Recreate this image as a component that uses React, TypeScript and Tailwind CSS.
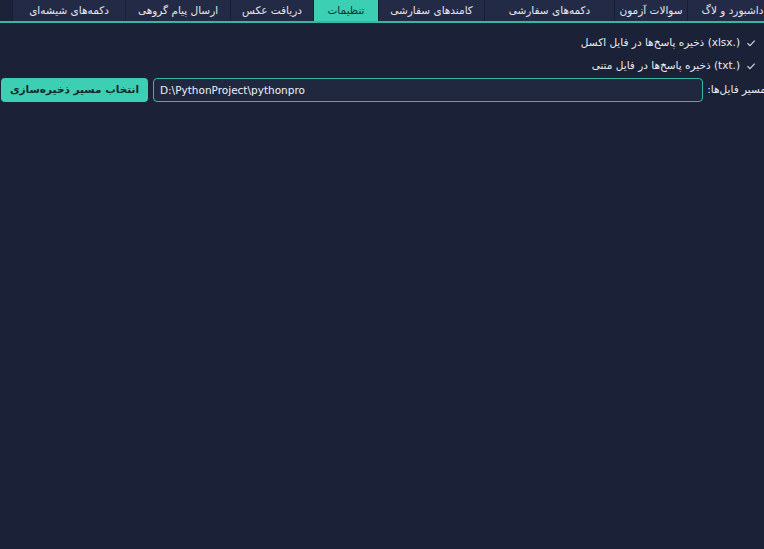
import React, { useState } from 'react';

const tabs = [
  { label: 'داشبورد و لاگ', w: 'w-[90px]' },
  { label: 'سوالات آزمون', w: 'w-[73px]' },
  { label: 'دکمه‌های سفارشی', w: 'w-[130px]' },
  { label: 'کامندهای سفارشی', w: 'w-[106px]' },
  { label: 'تنظیمات', w: 'w-[65px]' },
  { label: 'دریافت عکس', w: 'w-[83px]' },
  { label: 'ارسال پیام گروهی', w: 'w-[105px]' },
  { label: 'دکمه‌های شیشه‌ای', w: 'w-[113px]' },
];

const Check = () => (
  <svg width="10" height="10" viewBox="0 0 10 10" fill="none" stroke="currentColor" strokeWidth="1.2">
    <path d="M1.5 5.2 L4 7.6 L8.7 2.6" />
  </svg>
);

const App: React.FC = () => {
  const [active, setActive] = useState('تنظیمات');
  const [path, setPath] = useState('D:\\PythonProject\\pythonpro');

  return (
    <div
      className="w-[764px] h-[549px] bg-[#1b2136] text-[#e9ecf2] overflow-hidden"
      style={{ fontFamily: '"DejaVu Sans", "Noto Sans", sans-serif' }}
    >
      {/* tab bar */}
      <div className="h-[21px] flex flex-row-reverse justify-end pl-[12px] overflow-hidden bg-[#1c2339]">
        {tabs.map((t) => (
          <button
            key={t.label}
            dir="rtl"
            onClick={() => setActive(t.label)}
            className={`${t.w} shrink-0 h-full flex items-center justify-center text-[10.5px] border-l border-[#191f33] ${
              active === t.label ? 'bg-[#3ccfb4] text-[#10302c]' : 'bg-[#232a46] text-[#e3e6ee]'
            }`}
          >
            {t.label}
          </button>
        ))}
      </div>
      <div className="h-[2px] bg-[#34b8a0]" />

      <div dir="rtl" className="pt-[13px]">
        <div className="flex flex-col gap-[10px] pr-[8px] text-[10.5px]">
          <label className="flex items-center gap-[6px] h-[13px]">
            <span className="text-[#cfd6e4]"><Check /></span>
            <span>
              <bdi dir="ltr">(xlsx.)</bdi> ذخیره پاسخ‌ها در فایل اکسل
            </span>
          </label>
          <label className="flex items-center gap-[6px] h-[13px]">
            <span className="text-[#cfd6e4]"><Check /></span>
            <span>
              <bdi dir="ltr">(txt.)</bdi> ذخیره پاسخ‌ها در فایل متنی
            </span>
          </label>
        </div>

        <div className="flex items-center mt-[6px] -mr-[2px] pl-[1px]">
          <span className="text-[10.5px] whitespace-nowrap ml-[4px]">مسیر فایل‌ها:</span>
          <input
            dir="ltr"
            value={path}
            onChange={(e) => setPath(e.target.value)}
            className="flex-1 h-[24px] rounded-[4px] border border-[#34b8a0] bg-[#20283f] px-[6px] text-[10.5px] text-[#eef1f6] outline-none"
          />
          <button className="w-[147px] h-[24px] mr-[5px] rounded-[4px] bg-[#3ccfb4] text-[#122c2a] text-[10.5px] font-bold">
            انتخاب مسیر ذخیره‌سازی
          </button>
        </div>
      </div>
    </div>
  );
};

export default App;
